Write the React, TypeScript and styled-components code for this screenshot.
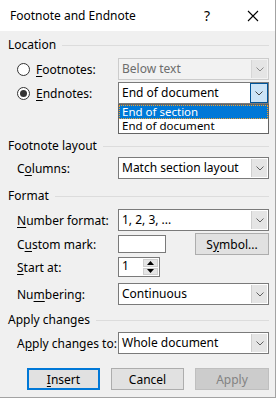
import React from "react";
import styled, { createGlobalStyle, css } from "styled-components";

const Global = createGlobalStyle`
  html, body { margin: 0; padding: 0; background: #ffffff; }
  body { font-family: "Noto Sans", "Open Sans", sans-serif; font-size: 12px; color: #000; }
  * { box-sizing: border-box; }
`;

const Window = styled.div`
  width: 276px;
  height: 398px;
  border-right: 1px solid #a3a3a3;
  border-bottom: 1px solid #a3a3a3;
  background: #f0f0f0;
  display: flex;
  flex-direction: column;
`;

const TitleBar = styled.div`
  height: 31px;
  background: #ffffff;
  display: flex;
  align-items: center;
  padding-left: 10px;
  flex-shrink: 0;
`;

const Title = styled.div`
  flex: 1;
  font-size: 12px;
  line-height: 16px;
`;

const Help = styled.div`
  width: 14px;
  text-align: center;
  font-size: 14px;
  margin-right: 33px;
`;

const Close = styled.div`
  width: 12px;
  height: 12px;
  margin-right: 16px;
  display: flex;
`;

const Body = styled.div`
  padding: 6px 6px 0 8px;
  position: relative;
  display: flex;
  flex-direction: column;
`;

const Section = styled.div<{ $mt: number }>`
  display: flex;
  flex-direction: column;
  margin-top: ${(p) => p.$mt}px;
`;

const Heading = styled.div`
  height: 16px;
  display: flex;
  align-items: center;
  gap: 6px;
  line-height: 16px;
  &::after {
    content: "";
    flex: 1;
    height: 1px;
    background: #dcdcdc;
  }
`;

const Row = styled.div<{ $mt: number; $h?: number }>`
  margin-top: ${(p) => p.$mt}px;
  height: ${(p) => p.$h ?? 22}px;
  display: grid;
  grid-template-columns: 101px 1fr;
  padding-left: 9px;
  align-items: center;
  position: relative;
`;

const Label = styled.div`
  display: flex;
  align-items: center;
  gap: 6px;
  white-space: nowrap;
`;

const U = styled.span`
  text-decoration: underline;
  text-underline-offset: 2px;
`;

const Radio = styled.span<{ $checked?: boolean }>`
  width: 13px;
  height: 13px;
  border-radius: 50%;
  border: 1px solid #333;
  background: #fff;
  display: inline-flex;
  align-items: center;
  justify-content: center;
  ${(p) =>
    p.$checked &&
    css`
      &::after {
        content: "";
        width: 7px;
        height: 7px;
        border-radius: 50%;
        background: #333;
      }
    `}
`;

const SelectBox = styled.div<{ $disabled?: boolean }>`
  height: 22px;
  width: 151px;
  display: flex;
  border: 1px solid ${(p) => (p.$disabled ? "#cccccc" : "#7a7a7a")};
  background: ${(p) => (p.$disabled ? "#f2f2f2" : "#ffffff")};
  color: ${(p) => (p.$disabled ? "#6d6d6d" : "#000")};
`;

const SelectText = styled.div`
  flex: 1;
  padding-left: 3px;
  line-height: 20px;
  white-space: nowrap;
`;

const SelectButton = styled.div<{ $active?: boolean; $disabled?: boolean }>`
  width: 16px;
  margin: 1px;
  display: flex;
  align-items: center;
  justify-content: center;
  background: ${(p) => (p.$active ? "#cce4f7" : "#e5e5e5")};
  border-left: 1px solid ${(p) => (p.$disabled ? "#d6d6d6" : "#cfcfcf")};
  ${(p) =>
    p.$active &&
    css`
      border: 1px solid #005499;
      margin: 0;
      width: 18px;
    `}
`;

const Chevron = ({ color = "#606060" }: { color?: string }) => (
  <svg width="8" height="5" viewBox="0 0 8 5">
    <path d="M0.5 0.5 L4 4 L7.5 0.5" fill="none" stroke={color} strokeWidth="1" />
  </svg>
);

const Select = ({
  value,
  disabled,
  active,
}: {
  value: string;
  disabled?: boolean;
  active?: boolean;
}) => (
  <SelectBox $disabled={disabled}>
    <SelectText>{value}</SelectText>
    <SelectButton $active={active} $disabled={disabled}>
      <Chevron color={active ? "#444" : disabled ? "#8a8a8a" : "#606060"} />
    </SelectButton>
  </SelectBox>
);

const DropList = styled.div`
  position: absolute;
  left: 110px;
  top: 22px;
  width: 151px;
  border: 1px solid #646464;
  background: #fff;
  z-index: 2;
`;

const DropItem = styled.div<{ $selected?: boolean }>`
  height: 14px;
  line-height: 14px;
  font-size: 11.5px;
  padding-left: 3px;
  white-space: nowrap;
  overflow: hidden;
  ${(p) =>
    p.$selected &&
    css`
      background: #0078d7;
      color: #fff;
      outline: 1px dotted #f0a030;
      outline-offset: -1px;
    `}
`;

const TextBox = styled.div<{ $w: number; $h?: number }>`
  width: ${(p) => p.$w}px;
  height: ${(p) => p.$h ?? 18}px;
  border: 1px solid #7a7a7a;
  background: #fff;
  display: flex;
`;

const ControlLine = styled.div`
  display: flex;
  align-items: center;
  justify-content: space-between;
  width: 151px;
`;

const Button = styled.div<{ $w: number; $default?: boolean; $disabled?: boolean }>`
  width: ${(p) => p.$w}px;
  height: 22px;
  display: flex;
  align-items: center;
  justify-content: center;
  background: ${(p) => (p.$disabled ? "#cccccc" : "#e1e1e1")};
  border: 1px solid ${(p) => (p.$disabled ? "#bfbfbf" : "#adadad")};
  color: ${(p) => (p.$disabled ? "#838383" : "#000")};
  ${(p) =>
    p.$default &&
    css`
      border: 2px solid #0078d7;
    `}
`;

const SpinText = styled.div`
  flex: 1;
  padding-left: 3px;
  line-height: 16px;
`;

const SpinButtons = styled.div`
  width: 15px;
  margin: 1px;
  display: flex;
  flex-direction: column;
  gap: 1px;
`;

const SpinBtn = styled.div`
  flex: 1;
  background: #e5e5e5;
  border: 1px solid #cfcfcf;
  display: flex;
  align-items: center;
  justify-content: center;
`;

const Footer = styled.div`
  display: flex;
  justify-content: flex-end;
  gap: 11px;
  margin-top: 14px;
`;

export default function App() {
  return (
    <>
      <Global />
      <Window>
        <TitleBar>
          <Title>Footnote and Endnote</Title>
          <Help>?</Help>
          <Close>
            <svg width="12" height="12" viewBox="0 0 12 12">
              <path d="M1 1 L11 11 M11 1 L1 11" stroke="#000" strokeWidth="1.1" />
            </svg>
          </Close>
        </TitleBar>
        <Body>
          <Section $mt={0}>
            <Heading>Location</Heading>
            <Row $mt={5}>
              <Label>
                <Radio />
                <span>
                  <U>F</U>ootnotes:
                </span>
              </Label>
              <Select value="Below text" disabled />
            </Row>
            <Row $mt={2}>
              <Label>
                <Radio $checked />
                <span>
                  <U>E</U>ndnotes:
                </span>
              </Label>
              <Select value="End of document" active />
              <DropList>
                <DropItem $selected>End of section</DropItem>
                <DropItem>End of document</DropItem>
              </DropList>
            </Row>
          </Section>
          <Section $mt={34}>
            <Heading>Footnote layout</Heading>
            <Row $mt={3}>
              <Label>
                <span>
                  C<U>o</U>lumns:
                </span>
              </Label>
              <Select value="Match section layout" />
            </Row>
          </Section>
          <Section $mt={9}>
            <Heading>Format</Heading>
            <Row $mt={5}>
              <Label>
                <span>
                  <U>N</U>umber format:
                </span>
              </Label>
              <Select value="1, 2, 3, ..." />
            </Row>
            <Row $mt={2}>
              <Label>
                <span>
                  C<U>u</U>stom mark:
                </span>
              </Label>
              <ControlLine>
                <TextBox $w={48} />
                <Button $w={74}>
                  <span>
                    S<U>y</U>mbol...
                  </span>
                </Button>
              </ControlLine>
            </Row>
            <Row $mt={1}>
              <Label>
                <span>
                  <U>S</U>tart at:
                </span>
              </Label>
              <TextBox $w={42} $h={20}>
                <SpinText>1</SpinText>
                <SpinButtons>
                  <SpinBtn>
                    <svg width="7" height="4" viewBox="0 0 7 4">
                      <path d="M0 4 L3.5 0 L7 4 Z" fill="#000" />
                    </svg>
                  </SpinBtn>
                  <SpinBtn>
                    <svg width="7" height="4" viewBox="0 0 7 4">
                      <path d="M0 0 L3.5 4 L7 0 Z" fill="#000" />
                    </svg>
                  </SpinBtn>
                </SpinButtons>
              </TextBox>
            </Row>
            <Row $mt={5}>
              <Label>
                <span>
                  Nu<U>m</U>bering:
                </span>
              </Label>
              <Select value="Continuous" />
            </Row>
          </Section>
          <Section $mt={7}>
            <Heading>Apply changes</Heading>
            <Row $mt={4}>
              <Label>
                <span>
                  A<U>p</U>ply changes to:
                </span>
              </Label>
              <Select value="Whole document" />
            </Row>
          </Section>
          <Footer>
            <Button $w={73} $default>
              <span>
                <U>I</U>nsert
              </span>
            </Button>
            <Button $w={73}>Cancel</Button>
            <Button $w={74} $disabled>
              Apply
            </Button>
          </Footer>
        </Body>
      </Window>
    </>
  );
}
